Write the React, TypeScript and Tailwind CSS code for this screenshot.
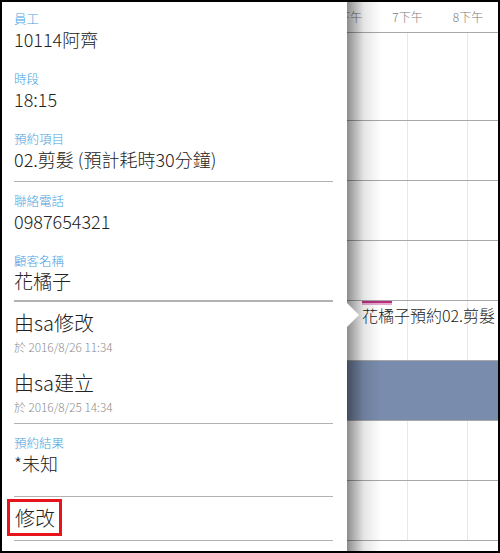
import type { ReactNode } from "react";

const FONT = { fontFamily: '"Noto Sans CJK TC", "Noto Sans", sans-serif' };

function Field({ label, value }: { label: string; value: string }) {
  return (
    <div>
      <p className="text-[12.5px] leading-[16px] text-[#4ba2e0]">{label}</p>
      <p className="text-[18px] leading-[24px] text-[#222]">{value}</p>
    </div>
  );
}

function HistoryEntry({ title, date }: { title: string; date: string }) {
  return (
    <div>
      <p className="text-[20px] leading-[26px] text-[#222]">{title}</p>
      <p className="mt-[3px] text-[11.8px] leading-[16px] text-[#8c8c8c]">{date}</p>
    </div>
  );
}

function Row({ height, blue, children }: { height: string; blue?: boolean; children?: ReactNode }) {
  return (
    <div className={`relative flex border-b border-[#a8a8a8] ${height} ${blue ? "bg-[#7a8cae]" : ""}`}>
      <div className={`w-[61px] shrink-0 border-r ${blue ? "border-transparent" : "border-[#e8e8e8]"}`} />
      <div className={`w-[60px] shrink-0 border-r ${blue ? "border-transparent" : "border-[#e8e8e8]"}`} />
      <div className="w-[60px] shrink-0" />
      {children}
    </div>
  );
}

export default function App() {
  return (
    <div
      className="relative flex h-[553px] w-[500px] overflow-hidden border-2 border-black bg-white font-light"
      style={FONT}
    >
      {/* detail panel */}
      <div className="z-10 flex w-[345px] shrink-0 flex-col bg-white px-[12px] pr-[14px]">
        <div className="flex flex-col gap-[20px] border-b border-[#b2b2b2] pt-[9px] pb-[10px]">
          <Field label="員工" value="10114阿齊" />
          <Field label="時段" value="18:15" />
          <Field label="預約項目" value="02.剪髮 (預計耗時30分鐘)" />
        </div>

        <div className="flex flex-col gap-[20px] border-b-2 border-[#b2b2b2] pt-[11px] pb-[7px]">
          <Field label="聯絡電話" value="0987654321" />
          <div>
            <p className="text-[12.5px] leading-[16px] text-[#4ba2e0]">顧客名稱</p>
            <p className="text-[19px] leading-[24px] text-[#222]">花橘子</p>
          </div>
        </div>

        <div className="flex flex-col gap-[15px] border-b border-[#b2b2b2] pt-[8px] pb-[8px]">
          <HistoryEntry title="由sa修改" date="於 2016/8/26 11:34" />
          <HistoryEntry title="由sa建立" date="於 2016/8/25 14:34" />
        </div>

        <div className="border-b border-[#b2b2b2] pt-[11px] pb-[21px]">
          <Field label="預約結果" value="*未知" />
        </div>

        <div className="border-b border-[#b2b2b2] pt-[2px] pb-[4px]">
          <button
            type="button"
            className="-ml-[7px] inline-flex border-[3px] border-[#e8141b] py-[3px] pr-[4px] pl-[5px] text-[20px] leading-[25px] text-[#222]"
          >
            修改
          </button>
        </div>
      </div>

      {/* calendar */}
      <div className="relative flex-1 overflow-hidden">
        <div className="flex h-[31px] items-center border-b border-[#a8a8a8] text-[12px] text-[#7a7a7a]">
          <div className="-ml-[30px] flex">
            <span className="w-[60px] shrink-0 text-center">6下午</span>
            <span className="w-[61px] shrink-0 text-center">7下午</span>
            <span className="w-[60px] shrink-0 text-center">8下午</span>
          </div>
        </div>
        <Row height="h-[88px]" />
        <Row height="h-[60px]" />
        <Row height="h-[60px]" />
        <Row height="h-[60px]" />
        <Row height="h-[60px]">
          <div className="absolute top-0 left-[15px] whitespace-nowrap">
            <div className="h-[2px] w-[30px] bg-[#b8307f]" />
            <div className="h-[2px] w-[30px] bg-[#e6aacd]" />
            <p className="text-[16px] leading-[20px] text-[#222]">花橘子預約02.剪髮</p>
          </div>
        </Row>
        <Row height="h-[60px]" blue />
        <Row height="h-[60px]" />
        <Row height="h-[60px]" />

        {/* panel shadow */}
        <div className="pointer-events-none absolute inset-y-0 left-0 w-[34px] bg-gradient-to-r from-black/45 via-black/10 to-transparent" />
        {/* pointer arrow */}
        <div className="absolute top-[301px] left-0 h-0 w-0 border-y-[12px] border-l-[12px] border-y-transparent border-l-white" />
      </div>
    </div>
  );
}
